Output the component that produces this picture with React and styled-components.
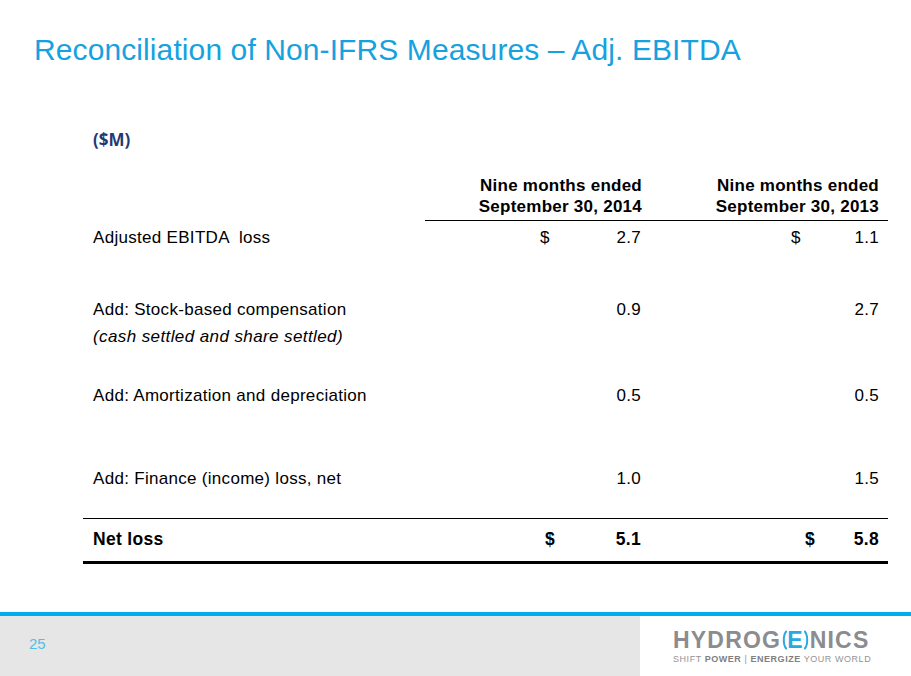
import React from "react";
import styled, { createGlobalStyle } from "styled-components";

const Global = createGlobalStyle`
  html, body { margin: 0; padding: 0; background: #fff; }
  body { font-family: "Liberation Sans", Arial, sans-serif; color: #000; }
  #root { width: 911px; height: 676px; overflow: hidden; }
`;

const Slide = styled.div`
  width: 911px;
  height: 676px;
  display: flex;
  flex-direction: column;
  background: #fff;
`;

const Title = styled.h1`
  margin: 0;
  padding: 33px 0 0 34px;
  font-family: "Liberation Sans", Arial, sans-serif;
  font-weight: 400;
  font-size: 30px;
  line-height: 34px;
  letter-spacing: 0.1px;
  color: #16a1df;
  white-space: nowrap;
`;

const Body = styled.div`
  padding: 0 23px 0 83px;
`;

const Unit = styled.div`
  margin-top: 63px;
  padding-left: 10px;
  font-family: "Open Sans", sans-serif;
  font-weight: 700;
  font-size: 17px;
  line-height: 20px;
  color: #1f3b73;
`;

const Table = styled.div`
  margin-top: 25px;
  display: grid;
  grid-template-columns: 342px 225px 238px;
  font-size: 17px;
  line-height: 20px;
  letter-spacing: 0.3px;
`;

const Cell = styled.div`
  height: ${(p) => p.$h}px;
  box-sizing: border-box;
  padding-top: ${(p) => p.$pt || 0}px;
  border-bottom: ${(p) => (p.$rule ? `${p.$rule}px solid #000` : "none")};
  font-weight: ${(p) => (p.$bold ? 700 : 400)};
  font-size: ${(p) => (p.$bold ? "17.5px" : "17px")};
`;

const Label = styled(Cell)`
  padding-left: 10px;
  white-space: pre;
`;

const HeadCell = styled(Cell)`
  text-align: right;
  padding-right: ${(p) => p.$pr}px;
  font-weight: 700;
  line-height: 21px;
  letter-spacing: 0.25px;
`;

const ValueCell = styled(Cell)`
  display: flex;
  justify-content: flex-end;
  padding-right: ${(p) => p.$pr}px;
`;

const Money = styled.div`
  width: ${(p) => p.$w}px;
  display: flex;
  justify-content: ${(p) => (p.$w ? "space-between" : "flex-end")};
`;

const Note = styled.div`
  margin-top: 7px;
  font-style: italic;
  letter-spacing: 0.4px;
`;

const Footer = styled.footer`
  margin-top: auto;
  height: 64px;
  box-sizing: border-box;
  border-top: 4px solid #00aeef;
  display: grid;
  grid-template-columns: 640px 1fr;
`;

const PageBox = styled.div`
  background: #e6e6e6;
  padding: 18px 0 0 29px;
  font-size: 15px;
  line-height: 20px;
  color: #52bde8;
`;

const LogoBox = styled.div`
  background: #fff;
  padding: 12px 0 0 33px;
  display: flex;
  flex-direction: column;
  align-items: flex-start;
`;

const Wordmark = styled.div`
  display: flex;
  align-items: center;
  font-family: "Liberation Sans", Arial, sans-serif;
  font-weight: 700;
  font-size: 23px;
  line-height: 24px;
  letter-spacing: 1.2px;
  color: #8a8c8f;
`;

const BrandE = styled.span`
  display: inline-flex;
  align-items: center;
  color: #29a9e1;
  margin: 0 1px;
`;

const Tagline = styled.div`
  margin-top: 2px;
  font-size: 9px;
  line-height: 11px;
  letter-spacing: 0.55px;
  color: #939598;
  white-space: nowrap;
  b { color: #7d7f82; }
`;

const Arc = ({ flip }) => (
  <svg width="5" height="20" viewBox="0 0 5 20" style={{ transform: flip ? "scaleX(-1)" : "none" }}>
    <path d="M4.2 1.5 C1 5 1 15 4.2 18.5" fill="none" stroke="#29a9e1" strokeWidth="2" strokeLinecap="round" />
  </svg>
);

const rows = [
  { label: "Adjusted EBITDA  loss", h: 79, pt: 7, a: "2.7", b: "1.1", dollars: [101, 88] },
  { label: "Add: Stock-based compensation", note: "(cash settled and share settled)", h: 86, a: "0.9", b: "2.7" },
  { label: "Add: Amortization and depreciation", h: 83, a: "0.5", b: "0.5" },
  { label: "Add: Finance (income) loss, net", h: 50, a: "1.0", b: "1.5", rule: 1 },
  { label: "Net loss", h: 45, pt: 10, a: "5.1", b: "5.8", dollars: [96, 74], rule: 3, bold: true },
];

export default function App() {
  return (
    <>
      <Global />
      <Slide>
        <Title>Reconciliation of Non-IFRS Measures – Adj. EBITDA</Title>
        <Body>
          <Unit>($M)</Unit>
          <Table>
            <Cell $h={46} />
            <HeadCell $h={46} $pr={8} $rule={1}>
              Nine months ended
              <br />
              September 30, 2014
            </HeadCell>
            <HeadCell $h={46} $pr={9} $rule={1}>
              Nine months ended
              <br />
              September 30, 2013
            </HeadCell>
            {rows.map((r) => (
              <React.Fragment key={r.label}>
                <Label $h={r.h} $pt={r.pt} $rule={r.rule} $bold={r.bold}>
                  {r.label}
                  {r.note && <Note>{r.note}</Note>}
                </Label>
                <ValueCell $h={r.h} $pt={r.pt} $rule={r.rule} $bold={r.bold} $pr={9}>
                  <Money $w={r.dollars ? r.dollars[0] : 0}>
                    {r.dollars && <span>$</span>}
                    <span>{r.a}</span>
                  </Money>
                </ValueCell>
                <ValueCell $h={r.h} $pt={r.pt} $rule={r.rule} $bold={r.bold} $pr={9}>
                  <Money $w={r.dollars ? r.dollars[1] : 0}>
                    {r.dollars && <span>$</span>}
                    <span>{r.b}</span>
                  </Money>
                </ValueCell>
              </React.Fragment>
            ))}
          </Table>
        </Body>
        <Footer>
          <PageBox>25</PageBox>
          <LogoBox>
            <Wordmark>
              HYDROG
              <BrandE>
                <Arc />
                E
                <Arc flip />
              </BrandE>
              NICS
            </Wordmark>
            <Tagline>
              SHIFT <b>POWER</b> | <b>ENERGIZE</b> YOUR WORLD
            </Tagline>
          </LogoBox>
        </Footer>
      </Slide>
    </>
  );
}
